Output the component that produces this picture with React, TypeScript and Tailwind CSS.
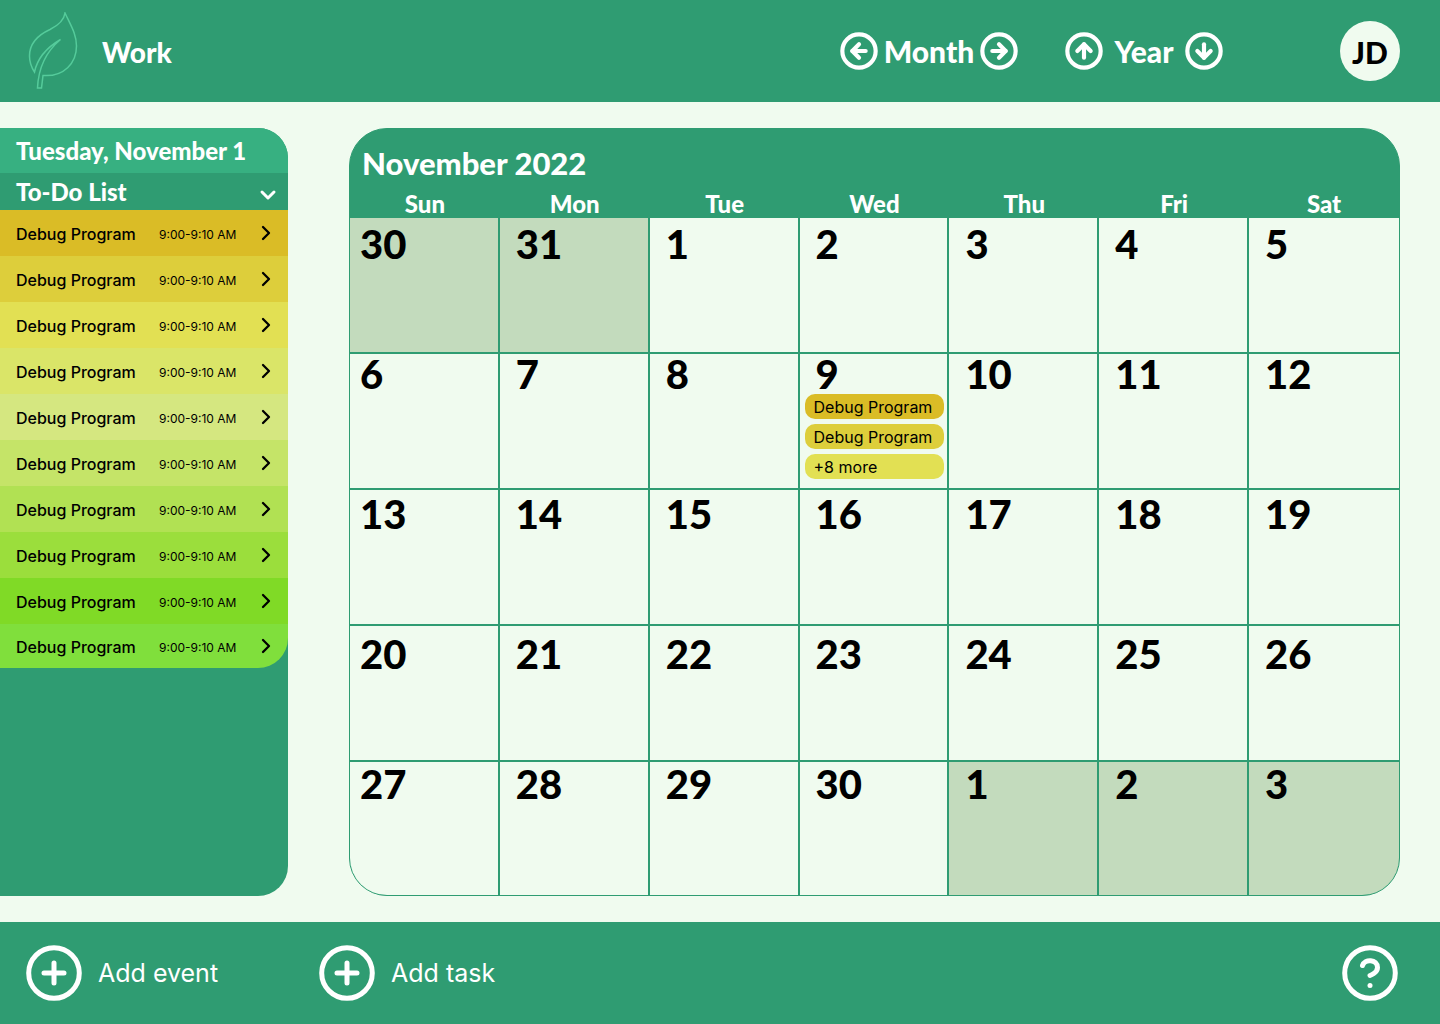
import {
  CircleArrowLeft,
  CircleArrowRight,
  CircleArrowUp,
  CircleArrowDown,
  ChevronDown,
  ChevronRight,
} from "lucide-react";

const tasks = [
  "bg-[#dabc26]",
  "bg-[#ddce3b]",
  "bg-[#e2e053]",
  "bg-[#dae568]",
  "bg-[#d5e780]",
  "bg-[#c5e468]",
  "bg-[#b1e153]",
  "bg-[#9bde3c]",
  "bg-[#80da26]",
  "bg-[#80df3c]",
];

const weekdays = ["Sun", "Mon", "Tue", "Wed", "Thu", "Fri", "Sat"];

const weeks = [
  { days: [30, 31, 1, 2, 3, 4, 5], pad: "pt-1.5", height: "h-[136px]" },
  { days: [6, 7, 8, 9, 10, 11, 12], pad: "pt-0", height: "h-[136px]" },
  { days: [13, 14, 15, 16, 17, 18, 19], pad: "pt-1", height: "h-[136px]" },
  { days: [20, 21, 22, 23, 24, 25, 26], pad: "pt-2", height: "h-[136px]" },
  { days: [27, 28, 29, 30, 1, 2, 3], pad: "pt-0.5", height: "h-[133px]" },
];

const events = [
  { label: "Debug Program", color: "bg-[#dabc26]" },
  { label: "Debug Program", color: "bg-[#ddce3b]" },
  { label: "+8 more", color: "bg-[#e2e053]" },
];

function isOutside(week: number, day: number) {
  return (week === 0 && day > 20) || (week === 4 && day < 10);
}

function Leaf() {
  return (
    <svg width="50" height="78" viewBox="0 0 50 78" fill="none" stroke="#55cb9b" strokeWidth="1.5" aria-hidden="true">
      <path d="M37 1C36 9 29 14 22 17.500C10 23 1.500 31 1.500 44C1.500 50 3.500 55.500 6.500 60C9 48 18 36 32.500 27.500C20 38 10.500 53 9.500 76H13.500L15 63.500C36 65 48.500 51 48.500 34C48.500 22 42.500 13 37 1Z" />
    </svg>
  );
}

function PlusCircle() {
  return (
    <svg width="56" height="56" viewBox="0 0 56 56" fill="none" stroke="currentColor" strokeWidth="5" strokeLinecap="round" aria-hidden="true">
      <circle cx="28" cy="28" r="25.3" />
      <path d="M28 18V38M18 28H38" />
    </svg>
  );
}

function HelpCircle() {
  return (
    <svg width="56" height="56" viewBox="0 0 56 56" fill="none" stroke="currentColor" strokeWidth="5" strokeLinecap="round" strokeLinejoin="round" aria-hidden="true">
      <circle cx="28" cy="28" r="25.3" />
      <path d="M20.500 20.500C22.500 13.500 35.500 14 35.500 22.500C35.500 28 28 30.500 28 30.500" />
      <path d="M28 40.500H28.010" />
    </svg>
  );
}

export default function App() {
  return (
    <div className="flex min-h-screen flex-col bg-[#f0fbef] font-['Inter',sans-serif] text-black">
      <header className="flex h-[102px] items-center bg-[#2f9c72] pr-10 pl-7 font-['Lato',sans-serif] font-black text-white">
        <Leaf />
        <h1 className="mt-0.5 ml-6 text-[28px] font-black">Work</h1>
        <nav className="ml-auto flex items-center gap-[45px] text-[30px]">
          <div className="flex items-center">
            <button aria-label="Previous month"><CircleArrowLeft size={40} strokeWidth={2.5} /></button>
            <span className="w-[100px] text-center">Month</span>
            <button aria-label="Next month"><CircleArrowRight size={40} strokeWidth={2.5} /></button>
          </div>
          <div className="flex items-center">
            <button aria-label="Previous year"><CircleArrowUp size={40} strokeWidth={2.5} /></button>
            <span className="w-20 text-center">Year</span>
            <button aria-label="Next year"><CircleArrowDown size={40} strokeWidth={2.5} /></button>
          </div>
        </nav>
        <button className="ml-[116px] size-[60px] rounded-full bg-[#f0fbef] pt-0.5 text-[30px] text-black">JD</button>
      </header>

      <main className="flex flex-1 items-stretch gap-[61px] py-[26px] pr-10">
        <aside className="w-72 shrink-0 overflow-hidden rounded-r-[30px] bg-[#2f9c72]">
          <h2 className="flex h-[45px] items-center bg-[#37b081] pl-4 font-['Lato',sans-serif] text-2xl font-black text-white">
            Tuesday, November 1
          </h2>
          <button className="flex h-[37px] w-full items-center justify-between pr-2 pl-4 font-['Lato',sans-serif] text-2xl font-black text-white">
            To-Do List
            <ChevronDown className="mt-1.5" size={24} strokeWidth={3} />
          </button>
          <ul className="overflow-hidden rounded-br-[30px]">
            {tasks.map((color) => (
              <li key={color} className={`h-[46px] last:h-11 ${color}`}>
                <button className="flex h-full w-full items-center pt-0.5 pr-2.5 pl-4 text-left">
                  <span className="w-[143px] text-base font-medium">Debug Program</span>
                  <span className="pt-0.5 text-xs">9:00-9:10 AM</span>
                  <ChevronRight className="mb-0.5 ml-auto" size={24} strokeWidth={2.3} />
                </button>
              </li>
            ))}
          </ul>
        </aside>

        <section className="min-w-0 flex-1 overflow-hidden rounded-[38px] border border-[#2f9c72] bg-[#2f9c72]">
          <h2 className="h-[61px] pt-3.5 pl-3 font-['Lato',sans-serif] text-[31px] leading-10 font-black text-white">
            November 2022
          </h2>
          <table className="w-full table-fixed border-separate border-spacing-0">
            <thead>
              <tr className="h-7 font-['Lato',sans-serif] text-2xl leading-7 text-white">
                {weekdays.map((name) => (
                  <th key={name} scope="col" className="p-0 text-center font-black">
                    {name}
                  </th>
                ))}
              </tr>
            </thead>
            <tbody>
              {weeks.map((week, w) => (
                <tr key={w} className={`group ${week.height}`}>
                  {week.days.map((day, d) => (
                    <td
                      key={day}
                      className={`border-r-2 border-b-2 border-[#2f9c72] p-0 align-top group-last:border-b-0 last:border-r-0 ${isOutside(w, day) ? "bg-[#c3dbbd]" : "bg-[#f0fbef]"}`}
                    >
                      <div className={`font-['Lato',sans-serif] text-[40px] leading-10 font-black ${d === 0 ? "pl-2.5" : "pl-4"} ${week.pad}`}>
                        {day}
                      </div>
                      {day === 9 && (
                        <ul className="flex flex-col gap-[5px] pr-[3px] pl-[5px]">
                          {events.map((event, i) => (
                            <li key={i}>
                              <button className={`block h-[25px] w-full rounded-[10px] pl-[9px] text-left text-base leading-6 ${event.color}`}>
                                {event.label}
                              </button>
                            </li>
                          ))}
                        </ul>
                      )}
                    </td>
                  ))}
                </tr>
              ))}
            </tbody>
          </table>
        </section>
      </main>

      <footer className="flex h-[102px] items-center bg-[#2f9c72] pr-[42px] pl-[26px] text-[25px] font-normal text-white">
        <button className="flex w-[293px] items-center gap-4">
          <PlusCircle />
          <span className="pt-0.5">Add event</span>
        </button>
        <button className="flex items-center gap-4">
          <PlusCircle />
          <span className="pt-0.5">Add task</span>
        </button>
        <button aria-label="Help" className="ml-auto"><HelpCircle /></button>
      </footer>
    </div>
  );
}
